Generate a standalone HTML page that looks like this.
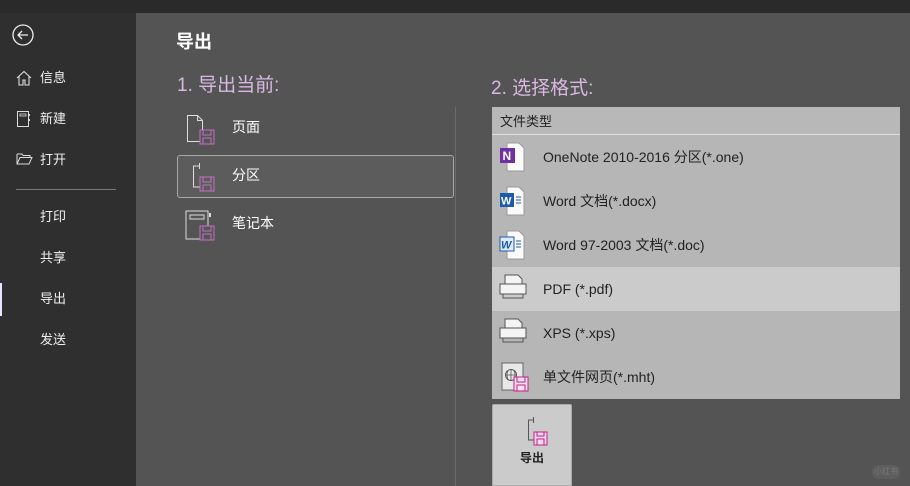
<!DOCTYPE html>
<html><head><meta charset="utf-8"><style>
*{margin:0;padding:0;box-sizing:border-box}
body{width:910px;height:486px;background:#2a2a2a;font-family:"Liberation Sans","Noto Sans CJK SC",sans-serif;position:relative;overflow:hidden}
.side{position:absolute;left:0;top:13px;width:136px;height:473px;background:#2f2f2f}
.main{position:absolute;left:136px;top:13px;width:774px;height:473px;background:#545454}
.abs{position:absolute}
.si{position:absolute;left:40px;color:#f0f0f0;font-size:13px;line-height:16px}
.lt{position:absolute;left:232px;color:#fff;font-size:14px;line-height:18px}
.row{position:absolute;left:492px;width:408px;height:44px;background:#b6b6b6}
.row span{position:absolute;left:51px;top:13px;font-size:14px;color:#222;line-height:18px}
.row svg{position:absolute;left:7px;top:7px}
</style></head><body>
<div class="side"></div>
<div class="main"></div>
<svg class="abs" style="left:11px;top:24px" width="24" height="24"><circle cx="12" cy="11" r="10" fill="none" stroke="#eee" stroke-width="1.3"/><path d="M17 11H7M11 7l-4 4 4 4" fill="none" stroke="#eee" stroke-width="1.3"/></svg>
<svg class="abs" style="left:16px;top:70px" width="16" height="16"><path d="M1 8L8 1.5 15 8M3 6.5V15h4v-5h2v5h4V6.5" fill="none" stroke="#ddd" stroke-width="1.1"/></svg>
<svg class="abs" style="left:16px;top:110px" width="16" height="18"><rect x="1.5" y="1.5" width="11" height="15" fill="none" stroke="#ddd"/><rect x="4" y="4" width="6" height="2" fill="none" stroke="#ddd" stroke-width=".8"/><path d="M13.5 4v2M13.5 9v2" stroke="#ddd"/></svg>
<svg class="abs" style="left:16px;top:152px" width="17" height="14"><path d="M1 2h5l1 1.5h7v2M1 2v10h12l3-6.5H4L1 12" fill="none" stroke="#ddd"/></svg>
<div class="si" style="top:70px">信息</div>
<div class="si" style="top:111px">新建</div>
<div class="si" style="top:152px">打开</div>
<div class="abs" style="left:16px;top:189px;width:100px;height:1px;background:#777"></div>
<div class="si" style="top:209px">打印</div>
<div class="si" style="top:250px">共享</div>
<div class="abs" style="left:0;top:283px;width:2px;height:33px;background:#e8e4ff"></div>
<div class="si" style="top:291px">导出</div>
<div class="si" style="top:332px">发送</div>

<div class="abs" style="left:176px;top:31px;color:#fff;font-size:18px;font-weight:bold;line-height:22px">导出</div>
<div class="abs" style="left:177px;top:74px;color:#d9b8e2;font-size:19px;line-height:24px">1. 导出当前:</div>
<div class="abs" style="left:491px;top:77px;color:#d9b8e2;font-size:19px;line-height:24px">2. 选择格式:</div>

<svg class="abs" style="left:186px;top:114px" width="32" height="33"><path d="M1.5 1.5h10l5 5v21h-15z M11.5 1.5v5h5" fill="none" stroke="#ddd"/><rect x="14" y="16" width="14" height="14" fill="#545454" stroke="#c070c0"/><rect x="17" y="16" width="8" height="5" fill="none" stroke="#c070c0"/><rect x="17" y="24" width="8" height="6" fill="none" stroke="#c070c0"/></svg>
<div class="lt" style="top:118px">页面</div>
<div class="abs" style="left:177px;top:155px;width:277px;height:43px;border:1px solid #a8a8a8;border-radius:3px;background:#5c5c5c"></div>
<svg class="abs" style="left:190px;top:162px" width="32" height="33"><path d="M9.5 1v6M9.5 4h-6v21h9" fill="none" stroke="#ddd"/><rect x="10" y="15" width="14" height="14" fill="#5c5c5c" stroke="#c070c0"/><rect x="13" y="15" width="8" height="5" fill="none" stroke="#c070c0"/><rect x="13" y="23" width="8" height="6" fill="none" stroke="#c070c0"/></svg>
<div class="lt" style="top:166px">分区</div>
<svg class="abs" style="left:184px;top:209px" width="34" height="33"><rect x="2" y="2" width="22" height="28" fill="none" stroke="#ddd"/><rect x="6" y="6" width="14" height="4" fill="none" stroke="#ddd"/><path d="M26 4v4" stroke="#ddd" stroke-width="2"/><rect x="16" y="17" width="14" height="14" fill="#545454" stroke="#c070c0"/><rect x="19" y="17" width="8" height="5" fill="none" stroke="#c070c0"/><rect x="19" y="25" width="8" height="6" fill="none" stroke="#c070c0"/></svg>
<div class="lt" style="top:214px">笔记本</div>

<div class="abs" style="left:455px;top:107px;width:1px;height:379px;background:#6a6a6a"></div>

<div class="abs" style="left:492px;top:107px;width:408px;height:28px;background:#b8b8b8;border-bottom:1px solid #e0e0e0"><span style="position:absolute;left:8px;top:4px;font-size:13px;color:#222">文件类型</span></div>
<div class="row" style="top:135px"><svg width="30" height="30"><path d="M8 1h12l5 5v23H8z" fill="#fafafa" stroke="#999"/><rect x="1" y="6" width="15" height="15" fill="#7030a0"/><text x="3.5" y="18" font-size="12" font-weight="bold" fill="#fff" font-family="Liberation Sans">N</text></svg><span>OneNote 2010-2016 分区(*.one)</span></div>
<div class="row" style="top:179px"><svg width="30" height="30"><path d="M8 1h12l5 5v23H8z" fill="#fafafa" stroke="#999"/><rect x="1" y="7" width="14" height="14" fill="#1e5aab"/><text x="2" y="18.5" font-size="11" font-weight="bold" fill="#fff" font-family="Liberation Sans">W</text><path d="M17 11h5M17 14h5M17 17h5" stroke="#1e5aab"/></svg><span>Word 文档(*.docx)</span></div>
<div class="row" style="top:223px"><svg width="30" height="30"><path d="M8 1h12l5 5v23H8z" fill="#fafafa" stroke="#999"/><rect x="1" y="7" width="14" height="14" fill="#dfeaf7" stroke="#1e5aab"/><text x="2" y="18.5" font-size="11" font-weight="bold" font-style="italic" fill="#1e5aab" font-family="Liberation Sans">W</text><path d="M17 11h5M17 14h5M17 17h5" stroke="#1e5aab"/></svg><span>Word 97-2003 文档(*.doc)</span></div>
<div class="row" style="top:267px;background:#cbcbcb"><svg width="30" height="30"><path d="M6 10V1h13l4 4v5" fill="#f4f4f4" stroke="#555"/><rect x="1" y="10" width="26" height="10" fill="#f4f4f4" stroke="#555"/><rect x="4" y="20" width="20" height="4" fill="none" stroke="#555"/></svg><span>PDF (*.pdf)</span></div>
<div class="row" style="top:311px"><svg width="30" height="30"><path d="M6 10V1h13l4 4v5" fill="#f4f4f4" stroke="#555"/><rect x="1" y="10" width="26" height="10" fill="#f4f4f4" stroke="#555"/><rect x="4" y="20" width="20" height="4" fill="none" stroke="#555"/></svg><span>XPS (*.xps)</span></div>
<div class="row" style="top:355px"><svg width="32" height="30"><rect x="3" y="1" width="21" height="27" fill="#e8e8e8" stroke="#666"/><circle cx="12" cy="13" r="5.5" fill="none" stroke="#555"/><path d="M6.5 13h11M12 7.5v11M9 8.5q-2 4.5 0 9M15 8.5q2 4.5 0 9" fill="none" stroke="#555" stroke-width=".8"/><rect x="15" y="15" width="14" height="14" fill="#f8e0f0" stroke="#c0208a"/><rect x="18" y="15" width="8" height="5" fill="none" stroke="#c0208a"/><rect x="18" y="23" width="8" height="6" fill="none" stroke="#c0208a"/></svg><span>单文件网页(*.mht)</span></div>

<div class="abs" style="left:492px;top:404px;width:80px;height:82px;background:#cbcbcb;border:1px solid #aaa;border-radius:2px 2px 0 0"></div>
<svg class="abs" style="left:524px;top:416px" width="26" height="32"><path d="M9.5 1v6M9.5 4h-5v20h7" fill="none" stroke="#555"/><rect x="10" y="16" width="13" height="13" fill="#f4d8ec" stroke="#c0208a"/><rect x="13" y="16" width="7" height="4" fill="none" stroke="#c0208a"/><rect x="13" y="23" width="7" height="6" fill="none" stroke="#c0208a"/></svg>
<div class="abs" style="left:520px;top:449px;font-size:12px;font-weight:bold;color:#222">导出</div>
<div class="abs" style="left:872px;top:465px;width:28px;height:14px;border-radius:7px;background:#5e5e5e;color:#777;font-size:8px;text-align:center;line-height:14px">小红书</div>
</body></html>
